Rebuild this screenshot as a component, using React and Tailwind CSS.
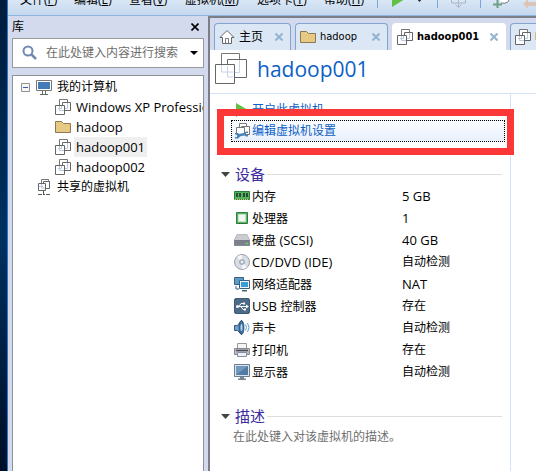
import React from "react";

const uiFont = "font-['Open_Sans','Noto_Sans_CJK_SC',sans-serif]";
const tabFont = "font-['DejaVu_Sans_Condensed','DejaVu_Sans','Noto_Sans_CJK_SC',sans-serif]";

function VmIcon() {
  return (
    <svg viewBox="0 0 16 16" className="size-4 shrink-0" fill="none" aria-hidden="true">
      <path d="M4.500 .5h8v9h-8z" fill="#fff" stroke="#777" />
      <path d="M7.500 3.500h8v8h-8z" fill="#fff" stroke="#666" />
      <path d="M.5 6.500h9v9h-9z" fill="#fff" stroke="#666" />
      <path d="M4.500 7v4.500H9M6.500 7v2.500H3M10 9.500h2.500V4" stroke="#bcc9e0" />
    </svg>
  );
}

function BigVmIcon() {
  return (
    <svg viewBox="0 0 33 33" className="size-[33px] shrink-0" fill="none" aria-hidden="true">
      <path d="M6.500 1.500h18v19h-18z" fill="#fff" stroke="#777" />
      <path d="M12.500 7.500h19v18h-19z" fill="#fff" stroke="#666" />
      <path d="M.5 12.500h19v19h-19z" fill="#fff" stroke="#666" />
      <path d="M12.500 14v11h6M6.500 13v7h12M20 20.500h4.500V8" stroke="#c8d4e8" />
    </svg>
  );
}

function FolderIcon() {
  return (
    <svg viewBox="0 0 16 16" className="size-4 shrink-0" aria-hidden="true">
      <path d="M.5 2.500h6l2 2h7v9H.5z" fill="#e6c983" stroke="#8d7a52" />
    </svg>
  );
}

function HomeIcon() {
  return (
    <svg viewBox="0 0 16 16" className="size-4 shrink-0" aria-hidden="true">
      <path d="M1 8.500 8 1.500l7 7h-2.500v6h-9v-6z" fill="#fff" stroke="#666" />
      <path d="M6.500 14.500v-5h3v5" fill="none" stroke="#777" />
    </svg>
  );
}

function ComputerIcon() {
  return (
    <svg viewBox="0 0 16 16" className="size-4 shrink-0" aria-hidden="true">
      <path d="M.5 1.500h15v10H.5z" fill="#fff" stroke="#777" />
      <path d="M2 3h12v7H2z" fill="#437bb8" />
      <path d="M6.500 12v3M9.500 12v3M4 15.500h8" fill="none" stroke="#666" />
    </svg>
  );
}

function SharedIcon() {
  return (
    <svg viewBox="0 0 16 16" className="size-4 shrink-0" fill="none" aria-hidden="true">
      <path d="M5.500.5h7v7h-7z" fill="#fff" stroke="#777" />
      <path d="M7.500 2.500h6v7h-6z" fill="#fff" stroke="#666" />
      <path d="M2.500 4.500h7v7h-7z" fill="#fff" stroke="#666" />
      <path d="M5.500 5v4H9M3 7.500h4" stroke="#bcc9e0" />
      <path d="M7.500 12v3M2 15.500h4M7 15.500h2M10 15.500h4" stroke="#555" />
    </svg>
  );
}

function PlayIcon() {
  return (
    <svg viewBox="0 0 14 14" className="size-[14px] shrink-0" aria-hidden="true">
      <path d="M2 0 14 7 2 14z" fill="#62c043" />
    </svg>
  );
}

function EditVmIcon() {
  return (
    <svg viewBox="0 0 16 16" className="size-4 shrink-0" fill="none" aria-hidden="true">
      <path d="M5.500.5h7v7h-7z" fill="#fff" stroke="#777" />
      <path d="M7.500 3.500h8v8h-8z" fill="#fff" stroke="#777" />
      <path d="M2.500 4.500h8v7h-8z" fill="#fff" stroke="#777" />
      <path d="M4 12.500 11 11" stroke="#4a82ba" strokeWidth="2.500" />
      <path d="M1 10h3l2 1.500v2L4 15.500H1V14h2v-2.500H1z" fill="#4a82ba" />
      <path d="M14 8.500h-2l-2 1.500v2l2 1.500h2V12h-2v-2h2z" fill="#4a82ba" />
    </svg>
  );
}

const deviceIcons = {
  memory: (
    <>
      <path d="M.5 3.500h15v8H.5z" fill="#4fb45c" stroke="#2e7c39" />
      <path d="M2 5h2v4H2zM5 5h2v4H5zM9 5h2v4H9zM12 5h2v4h-2z" fill="#2c4a35" />
      <path d="M1 11.500h14" stroke="#d6c774" strokeDasharray="1 1" />
    </>
  ),
  cpu: (
    <>
      <path d="M2.500 2.500h11v11h-11z" fill="#58b565" stroke="#2c7f3c" />
      <path d="M4.500 4.500h7v7h-7z" fill="#f3f5f3" stroke="#c7e3ca" />
      <path d="M3 13.500h10" stroke="#276c34" strokeDasharray="1 1" />
    </>
  ),
  disk: (
    <>
      <path d="M3 2.500h10l3 6H0z" fill="#c9ccd1" stroke="#999da3" strokeWidth=".6" />
      <path d="M.3 8.500h15.400v5H.3z" fill="#7b818a" stroke="#60656d" strokeWidth=".6" />
      <path d="M11.500 11.500H14" stroke="#5de05b" strokeWidth="1.200" />
    </>
  ),
  cd: (
    <>
      <circle cx="8" cy="8" r="7.500" fill="#d9dde3" stroke="#9aa2ae" />
      <path d="M8 8 3 3a7 7 0 0 1 5-2zM8 8l5 5a7 7 0 0 1-5 2z" fill="#f5f7fa" />
      <circle cx="8" cy="8" r="2.500" fill="#b8c1cf" stroke="#8f9bac" strokeWidth=".7" />
      <circle cx="8" cy="8" r="1" fill="#fff" />
    </>
  ),
  network: (
    <>
      <path d="M.5 1.500h9v7h-9z" fill="#5c9ccb" stroke="#38617f" />
      <path d="M2 10v3h3" fill="none" stroke="#38617f" />
      <path d="M5.500 4.500h10v8h-10z" fill="#f0f5fa" stroke="#38617f" />
      <path d="M7 6h7v5H7z" fill="#3d9bd9" />
      <path d="M8 14h5v1.500H8z" fill="#4a5f70" />
    </>
  ),
  usb: (
    <>
      <rect x=".5" y=".5" width="15" height="15" rx="1.500" fill="#4d6a86" stroke="#3e5973" />
      <path d="M2.500 8.500H13M5 8.500 7 5.500h3M7 8.500l2 3h2" fill="none" stroke="#fff" />
      <circle cx="3.500" cy="8.500" r="1.500" fill="#fff" />
      <path d="m12 6.500 3 2-3 2zM9 4.500h2v2H9zM10 10.500h2v2h-2z" fill="#fff" />
    </>
  ),
  sound: (
    <>
      <path d="M.5 5.500h3l4-5v14l-4-4h-3z" fill="#73a3cf" stroke="#31597f" />
      <ellipse cx="7.500" cy="7.500" rx="2.500" ry="7" fill="#3b6d9b" stroke="#2b4b6c" strokeWidth=".7" />
      <ellipse cx="7.500" cy="7.500" rx="1" ry="3.500" fill="#b8d5ee" />
      <path d="M11.500 4.500q2 3 0 6M13.500 3q3 4.500 0 9" fill="none" stroke="#5aa0d8" />
    </>
  ),
  printer: (
    <>
      <path d="M3.500 1.500h9v6h-9z" fill="#f5f5f5" stroke="#999" />
      <path d="M.5 6.500h15v6H.5z" fill="#b9bcc1" stroke="#85888e" />
      <path d="M2 8.500h12" stroke="#484c53" strokeWidth="1.500" />
      <path d="M3.500 10.500h9v4h-9z" fill="#eceff6" stroke="#8a8ea2" />
    </>
  ),
  display: (
    <>
      <path d="M.5.5h15v12H.5z" fill="#dbe4ec" stroke="#6b7d8f" />
      <path d="M2 2h12v9H2z" fill="#517ba4" />
      <path d="M2 2h12L2 11z" fill="#7198bd" />
      <path d="M6 13h4v1.500H6zM4 14.500h8V16H4z" fill="#7b858f" />
    </>
  ),
};

const menus = [
  ["文件", "F", "w-[54px]"],
  ["编辑", "E", "w-[55px]"],
  ["查看", "V", "w-[56px]"],
  ["虚拟机", "M", "w-[72px]"],
  ["选项卡", "T", "w-[67px]"],
  ["帮助", "H", "w-[53px]"],
];

const devices = [
  ["memory", "内存", "", "5 GB"],
  ["cpu", "处理器", "", "1"],
  ["disk", "硬盘", " (SCSI)", "40 GB"],
  ["cd", "", "CD/DVD (IDE)", "自动检测"],
  ["network", "网络适配器", "", "NAT"],
  ["usb", "", "USB ", "存在", "控制器"],
  ["sound", "声卡", "", "自动检测"],
  ["printer", "打印机", "", "存在"],
  ["display", "显示器", "", "自动检测"],
];

function Separator() {
  return <span className="h-2 w-px shrink-0 bg-[#7ba7d8]" />;
}

function MenuBar() {
  return (
    <header className="flex h-4 items-start overflow-hidden border-b border-[#8fb4de] bg-linear-to-b from-[#d9e7f6] to-[#c5d8ee] pl-3">
      <nav className="flex h-2 shrink-0 items-end">
        {menus.map(([name, key, width]) => (
          <button key={key} className={`${width} shrink-0 text-left text-xs/4 whitespace-nowrap text-black`}>
            {name}(<u>{key}</u>)
          </button>
        ))}
      </nav>
      <div className="flex h-2 shrink-0 items-end">
        <Separator />
        <button aria-label="开启" className="ml-3.5 w-[45px]">
          <svg viewBox="0 0 45 14" className="h-3.5 w-[45px]" aria-hidden="true">
            <path d="M0 0 13 5 0 13z" fill="#62c043" />
            <path d="M25 5h5L27.500 8z" fill="#222" />
          </svg>
        </button>
        <Separator />
        <button aria-label="发送" className="ml-3 w-[30px]">
          <svg viewBox="0 0 30 14" className="h-3.5 w-[30px]" fill="none" stroke="#aab4c2" aria-hidden="true">
            <path d="M1.500 1v8h14V1M8.500 1v12M5.500 10.500l3 3 3-3M1.500 5.500h14" />
          </svg>
        </button>
        <Separator />
        <button aria-label="快照" className="ml-3 w-[30px]">
          <svg viewBox="0 0 30 14" className="h-3.5 w-[30px]" fill="none" aria-hidden="true">
            <path d="M8 9q9 2 9-8H6" fill="#fff" stroke="#777" />
            <path d="M4.500 6v8M0 10.500h9" stroke="#6fa083" strokeWidth="2" />
          </svg>
        </button>
        <button aria-label="恢复">
          <svg viewBox="0 0 16 14" className="h-3.5 w-4" aria-hidden="true">
            <path d="m0 10 5-5v3h11v4H5v3z" fill="#dcc4b8" />
          </svg>
        </button>
      </div>
    </header>
  );
}

function TreeItem({ icon, children, selected }) {
  return (
    <li role="treeitem" aria-selected={!!selected} className="flex h-5 items-center pl-[42px]">
      {icon}
      <span className={`ml-[3px] px-0.5 text-[13px]/5 whitespace-nowrap ${selected ? "bg-[#efefef]" : ""}`}>
        {children}
      </span>
    </li>
  );
}

function Sidebar() {
  return (
    <aside className="flex w-[200px] shrink-0 flex-col bg-[#d3daed] px-1">
      <div className="flex h-[22px] items-center justify-between pr-[5px]">
        <h2 className="text-xs">库</h2>
        <button aria-label="关闭">
          <svg viewBox="0 0 8 8" className="size-2" aria-hidden="true">
            <path d="m.5.5 7 7m0-7-7 7" stroke="#000" strokeWidth="1.600" />
          </svg>
        </button>
      </div>
      <div className="flex h-[30px] items-center border border-[#999] bg-white pr-[5px] pl-[9px]">
        <svg viewBox="0 0 16 16" className="size-4 shrink-0" fill="none" stroke="#7389b3" aria-hidden="true">
          <circle cx="6" cy="6" r="4.500" strokeWidth="2" />
          <path d="m9.500 9.500 4.500 4.500" strokeWidth="2.500" />
        </svg>
        <input
          aria-label="搜索"
          placeholder="在此处键入内容进行搜索"
          className="ml-2 w-full min-w-0 text-xs outline-none placeholder:text-[#6d6d6d]"
        />
        <button aria-label="搜索选项">
          <svg viewBox="0 0 8 4" className="h-1 w-2" aria-hidden="true">
            <path d="M0 0h8L4 4z" fill="#000" />
          </svg>
        </button>
      </div>
      <ul role="tree" className="mt-[7px] flex-1 overflow-hidden border border-b-0 border-[#8d8f96] bg-white pt-px">
        <li role="treeitem" className="flex h-5 items-center pl-2">
          <svg viewBox="0 0 9 9" className="size-[9px] shrink-0" aria-hidden="true">
            <path d="M.5.5h8v8h-8z" fill="#f7f7f7" stroke="#919191" />
            <path d="M2 4.500h5" stroke="#3c5ba8" />
          </svg>
          <span className="ml-1.5">
            <ComputerIcon />
          </span>
          <span className="ml-[5px] text-xs">我的计算机</span>
        </li>
        <TreeItem icon={<VmIcon />}>Windows XP Professional</TreeItem>
        <TreeItem icon={<FolderIcon />}>hadoop</TreeItem>
        <TreeItem icon={<VmIcon />} selected>
          hadoop001
        </TreeItem>
        <TreeItem icon={<VmIcon />}>hadoop002</TreeItem>
        <li role="treeitem" className="flex h-5 items-center pl-[23px]">
          <SharedIcon />
          <span className="ml-[5px] text-xs">共享的虚拟机</span>
        </li>
      </ul>
    </aside>
  );
}

function Tab({ icon, label, active, width, text }) {
  return (
    <div
      className={`flex h-[27px] shrink-0 items-center rounded-t-sm border border-b-0 pr-[7px] pl-1 ${width} ${
        active ? "border-white bg-white" : "border-[#7fa5cf] bg-[#dbe7f5]"
      }`}
    >
      {icon}
      <button role="tab" aria-selected={!!active} className={`ml-1 flex-1 text-left whitespace-nowrap ${text}`}>
        {label}
      </button>
      <button aria-label="关闭选项卡">
        <svg viewBox="0 0 8 8" className="size-2" aria-hidden="true">
          <path d="m.5.5 7 7m0-7-7 7" stroke="#93b3d0" strokeWidth="2" />
        </svg>
      </button>
    </div>
  );
}

function SectionTitle({ children }) {
  return (
    <div className="flex h-[22px] items-center pr-2 pl-[11px]">
      <svg viewBox="0 0 9 5" className="h-[5px] w-[9px]" aria-hidden="true">
        <path d="M0 0h9L4.500 5z" fill="#444" />
      </svg>
      <h2 className="ml-[5px] text-[15px]/5 text-[#3d2ca0]">{children}</h2>
      <span className="ml-0.5 h-px flex-1 bg-[#dedede]" />
    </div>
  );
}

function Details() {
  return (
    <section className="w-[301px] shrink-0 border-r border-[#d4e2f5] pt-[5px]">
      <div className="relative">
        <a href="#start" className="flex h-[21px] items-center pl-6 text-xs text-[#0c5fc6]">
          <PlayIcon />
          <span className="ml-1">开启此虚拟机</span>
        </a>
        <a
          href="#settings"
          className="mr-[5px] ml-[21px] flex h-[22px] items-center border border-dotted border-black bg-linear-to-b from-[#fafcff] to-[#e9f1fc] pl-0.5 text-xs text-[#0c5fc6]"
        >
          <EditVmIcon />
          <span className="ml-0.5">编辑虚拟机设置</span>
        </a>
        <div className="pointer-events-none absolute top-2.5 -right-1 left-[7px] h-[46px] border-[7px] border-[#fc3737]" />
      </div>
      <div className="mt-[21px]">
        <SectionTitle>设备</SectionTitle>
      </div>
      <table className="w-full border-collapse text-xs">
        <tbody>
          {devices.map(([icon, name, latin, value, tail]) => (
            <tr key={icon} className="h-[22px]">
              <th scope="row" className="w-48 p-0 pl-6 text-left font-normal">
                <span className="flex items-center gap-0.5 whitespace-nowrap">
                  <svg viewBox="0 0 16 16" className="size-4 shrink-0" aria-hidden="true">
                    {deviceIcons[icon]}
                  </svg>
                  <span className="leading-5">
                    {name}
                    <span className="text-[13px]">{latin}</span>
                    {tail}
                  </span>
                </span>
              </th>
              <td className={`p-0 leading-5 ${/[A-Z0-9]/.test(value) ? "text-[13px]" : "text-xs"}`}>{value}</td>
            </tr>
          ))}
        </tbody>
      </table>
      <div className="mt-[22px]">
        <SectionTitle>描述</SectionTitle>
        <textarea
          aria-label="描述"
          rows={1}
          placeholder="在此处键入对该虚拟机的描述。"
          className="block w-full resize-none pr-2 pl-[23px] text-xs/5 outline-none placeholder:text-[#707070]"
        />
      </div>
    </section>
  );
}

export default function App() {
  return (
    <div className={`flex min-h-screen overflow-hidden text-black ${uiFont}`}>
      <div className="w-[7px] shrink-0 bg-linear-to-b from-[#001b3c] via-[#00315f] to-[#000f28]" />
      <div className="flex min-w-0 flex-1 flex-col border-l border-[#2377c9] bg-[#d3daed]">
        <MenuBar />
        <div className="flex flex-1">
          <Sidebar />
          <main className="flex min-w-0 flex-1 flex-col border-t-2 border-l-2 border-[#7c7f87] bg-white">
            <div role="tablist" className="flex gap-1 overflow-hidden bg-[#d3daed] pt-[5px] pl-1">
              <Tab icon={<HomeIcon />} label="主页" width="w-[77px]" text="text-xs" />
              <Tab icon={<FolderIcon />} label="hadoop" width="w-[93px]" text={`text-[11px] ${tabFont}`} />
              <Tab icon={<VmIcon />} label="hadoop001" active width="w-[114px]" text={`text-[11px] font-bold ${tabFont}`} />
              <Tab icon={<VmIcon />} label="hadoop002" width="w-[114px]" text={`text-[11px] ${tabFont}`} />
            </div>
            <div className="flex h-11 items-center gap-[9px] border-b border-[#d4e2f5] pb-1.5 pl-[5px]">
              <BigVmIcon />
              <h1 className="text-[21px]/8 text-[#0c5fc6]">hadoop001</h1>
            </div>
            <div className="flex flex-1">
              <Details />
            </div>
          </main>
        </div>
      </div>
    </div>
  );
}
